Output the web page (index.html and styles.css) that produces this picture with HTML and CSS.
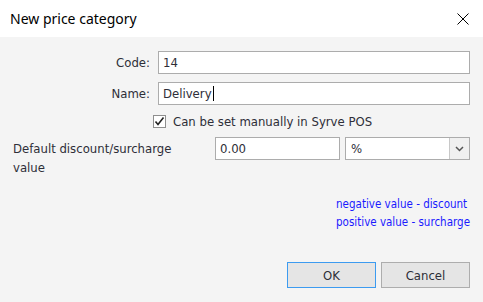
FILE: index.html
```html
<!DOCTYPE html>
<html lang="en">
<head>
    <meta charset="UTF-8">
    <title>New price category</title>
    <link rel="stylesheet" href="styles.css">
</head>
<body>
    <div class="dialog">
        <div class="title-bar">
            <span class="title">New price category</span>
            <svg class="close" width="12" height="12" viewBox="0 0 12 12">
                <path d="M0.5 0.5 L11.5 11.5 M11.5 0.5 L0.5 11.5" stroke="#000" stroke-width="1"/>
            </svg>
        </div>
        <div class="content">
            <div class="field">
                <label class="field-label">Code:</label>
                <div class="textbox">14</div>
            </div>
            <div class="field">
                <label class="field-label">Name:</label>
                <div class="textbox">Delivery<span class="caret"></span></div>
            </div>
            <div class="check-row">
                <span class="checkbox">
                    <svg width="11" height="11" viewBox="0 0 11 11">
                        <path d="M1.5 5.5 L4 8.5 L9.5 1.5" fill="none" stroke="#222" stroke-width="1.6"/>
                    </svg>
                </span>
                <span>Can be set manually in Syrve POS</span>
            </div>
            <div class="default-row">
                <span class="default-label">Default discount/surcharge value</span>
                <div class="textbox value-box">0.00</div>
                <div class="combo">
                    <span class="combo-text">%</span>
                    <span class="combo-button">
                        <svg width="9" height="6" viewBox="0 0 9 6">
                            <path d="M1 1 L4.5 4.5 L8 1" fill="none" stroke="#555" stroke-width="1.5"/>
                        </svg>
                    </span>
                </div>
            </div>
            <div class="hint-wrap">
                <div class="hint">
                    <span>negative value - discount</span>
                    <span>positive value - surcharge</span>
                </div>
            </div>
            <div class="buttons">
                <button class="btn btn-default">OK</button>
                <button class="btn">Cancel</button>
            </div>
        </div>
    </div>
</body>
</html>
```
FILE: styles.css
```css
body {
    margin: 0;
    background-color: #f4f4f4;
    font-family: 'DejaVu Sans Condensed', 'DejaVu Sans', sans-serif;
    font-size: 13px;
    color: #2e2e38;
}
.dialog {
    width: 483px;
    height: 302px;
    background-color: #f4f4f4;
}
.title-bar {
    height: 37px;
    background-color: #fff;
    display: flex;
    align-items: center;
    justify-content: space-between;
    padding: 0 14px 0 10px;
}
.title {
    font-family: 'Noto Sans', sans-serif;
    font-size: 14px;
    color: #000;
}
.close {
    display: block;
    margin-top: 1px;
}
.content {
    padding: 14px 13px 0 13px;
}
.field {
    display: flex;
    align-items: center;
    margin-bottom: 8px;
}
.field-label {
    width: 137px;
    margin-right: 8px;
    text-align: right;
}
.textbox {
    flex: 1;
    height: 21px;
    line-height: 21px;
    padding: 0 4px;
    background-color: #fff;
    border: 1px solid #acacac;
    display: flex;
    align-items: center;
}
.caret {
    display: inline-block;
    width: 1px;
    height: 15px;
    background-color: #000;
    margin-left: 1px;
}
.check-row {
    display: flex;
    align-items: center;
    margin: 6px 0 0 140px;
    height: 16px;
}
.checkbox {
    width: 11px;
    height: 11px;
    border: 1px solid #8e8e8e;
    background-color: #fff;
    margin-right: 7px;
    display: flex;
    align-items: center;
    justify-content: center;
}
.checkbox svg {
    display: block;
}
.default-row {
    display: flex;
    align-items: flex-start;
    margin-top: 8px;
}
.default-label {
    width: 175px;
    margin-top: 2px;
    margin-right: 27px;
    line-height: 19px;
}
.value-box {
    flex: none;
    width: 115px;
    margin-right: 5px;
}
.combo {
    flex: 1;
    height: 21px;
    display: flex;
    background-color: #fff;
    border: 1px solid #acacac;
}
.combo-text {
    flex: 1;
    padding: 0 5px;
    line-height: 21px;
}
.combo-button {
    width: 19px;
    border-left: 1px solid #c8c8c8;
    background-color: #f0f0f0;
    display: flex;
    align-items: center;
    justify-content: center;
}
.hint-wrap {
    display: flex;
    justify-content: flex-end;
    margin-top: 18px;
}
.hint {
    display: flex;
    flex-direction: column;
    align-items: flex-start;
    font-size: 11.5px;
    line-height: 18px;
    color: #1a1aff;
}
.buttons {
    display: flex;
    justify-content: flex-end;
    gap: 5px;
    margin-top: 31px;
}
.btn {
    width: 89px;
    height: 26px;
    font-family: 'DejaVu Sans Condensed', 'DejaVu Sans', sans-serif;
    font-size: 13px;
    color: #2e2e38;
    background-color: #e5e5e5;
    border: 1px solid #adadad;
    padding: 0;
}
.btn-default {
    border: 1px solid #3c9bf0;
}
```
